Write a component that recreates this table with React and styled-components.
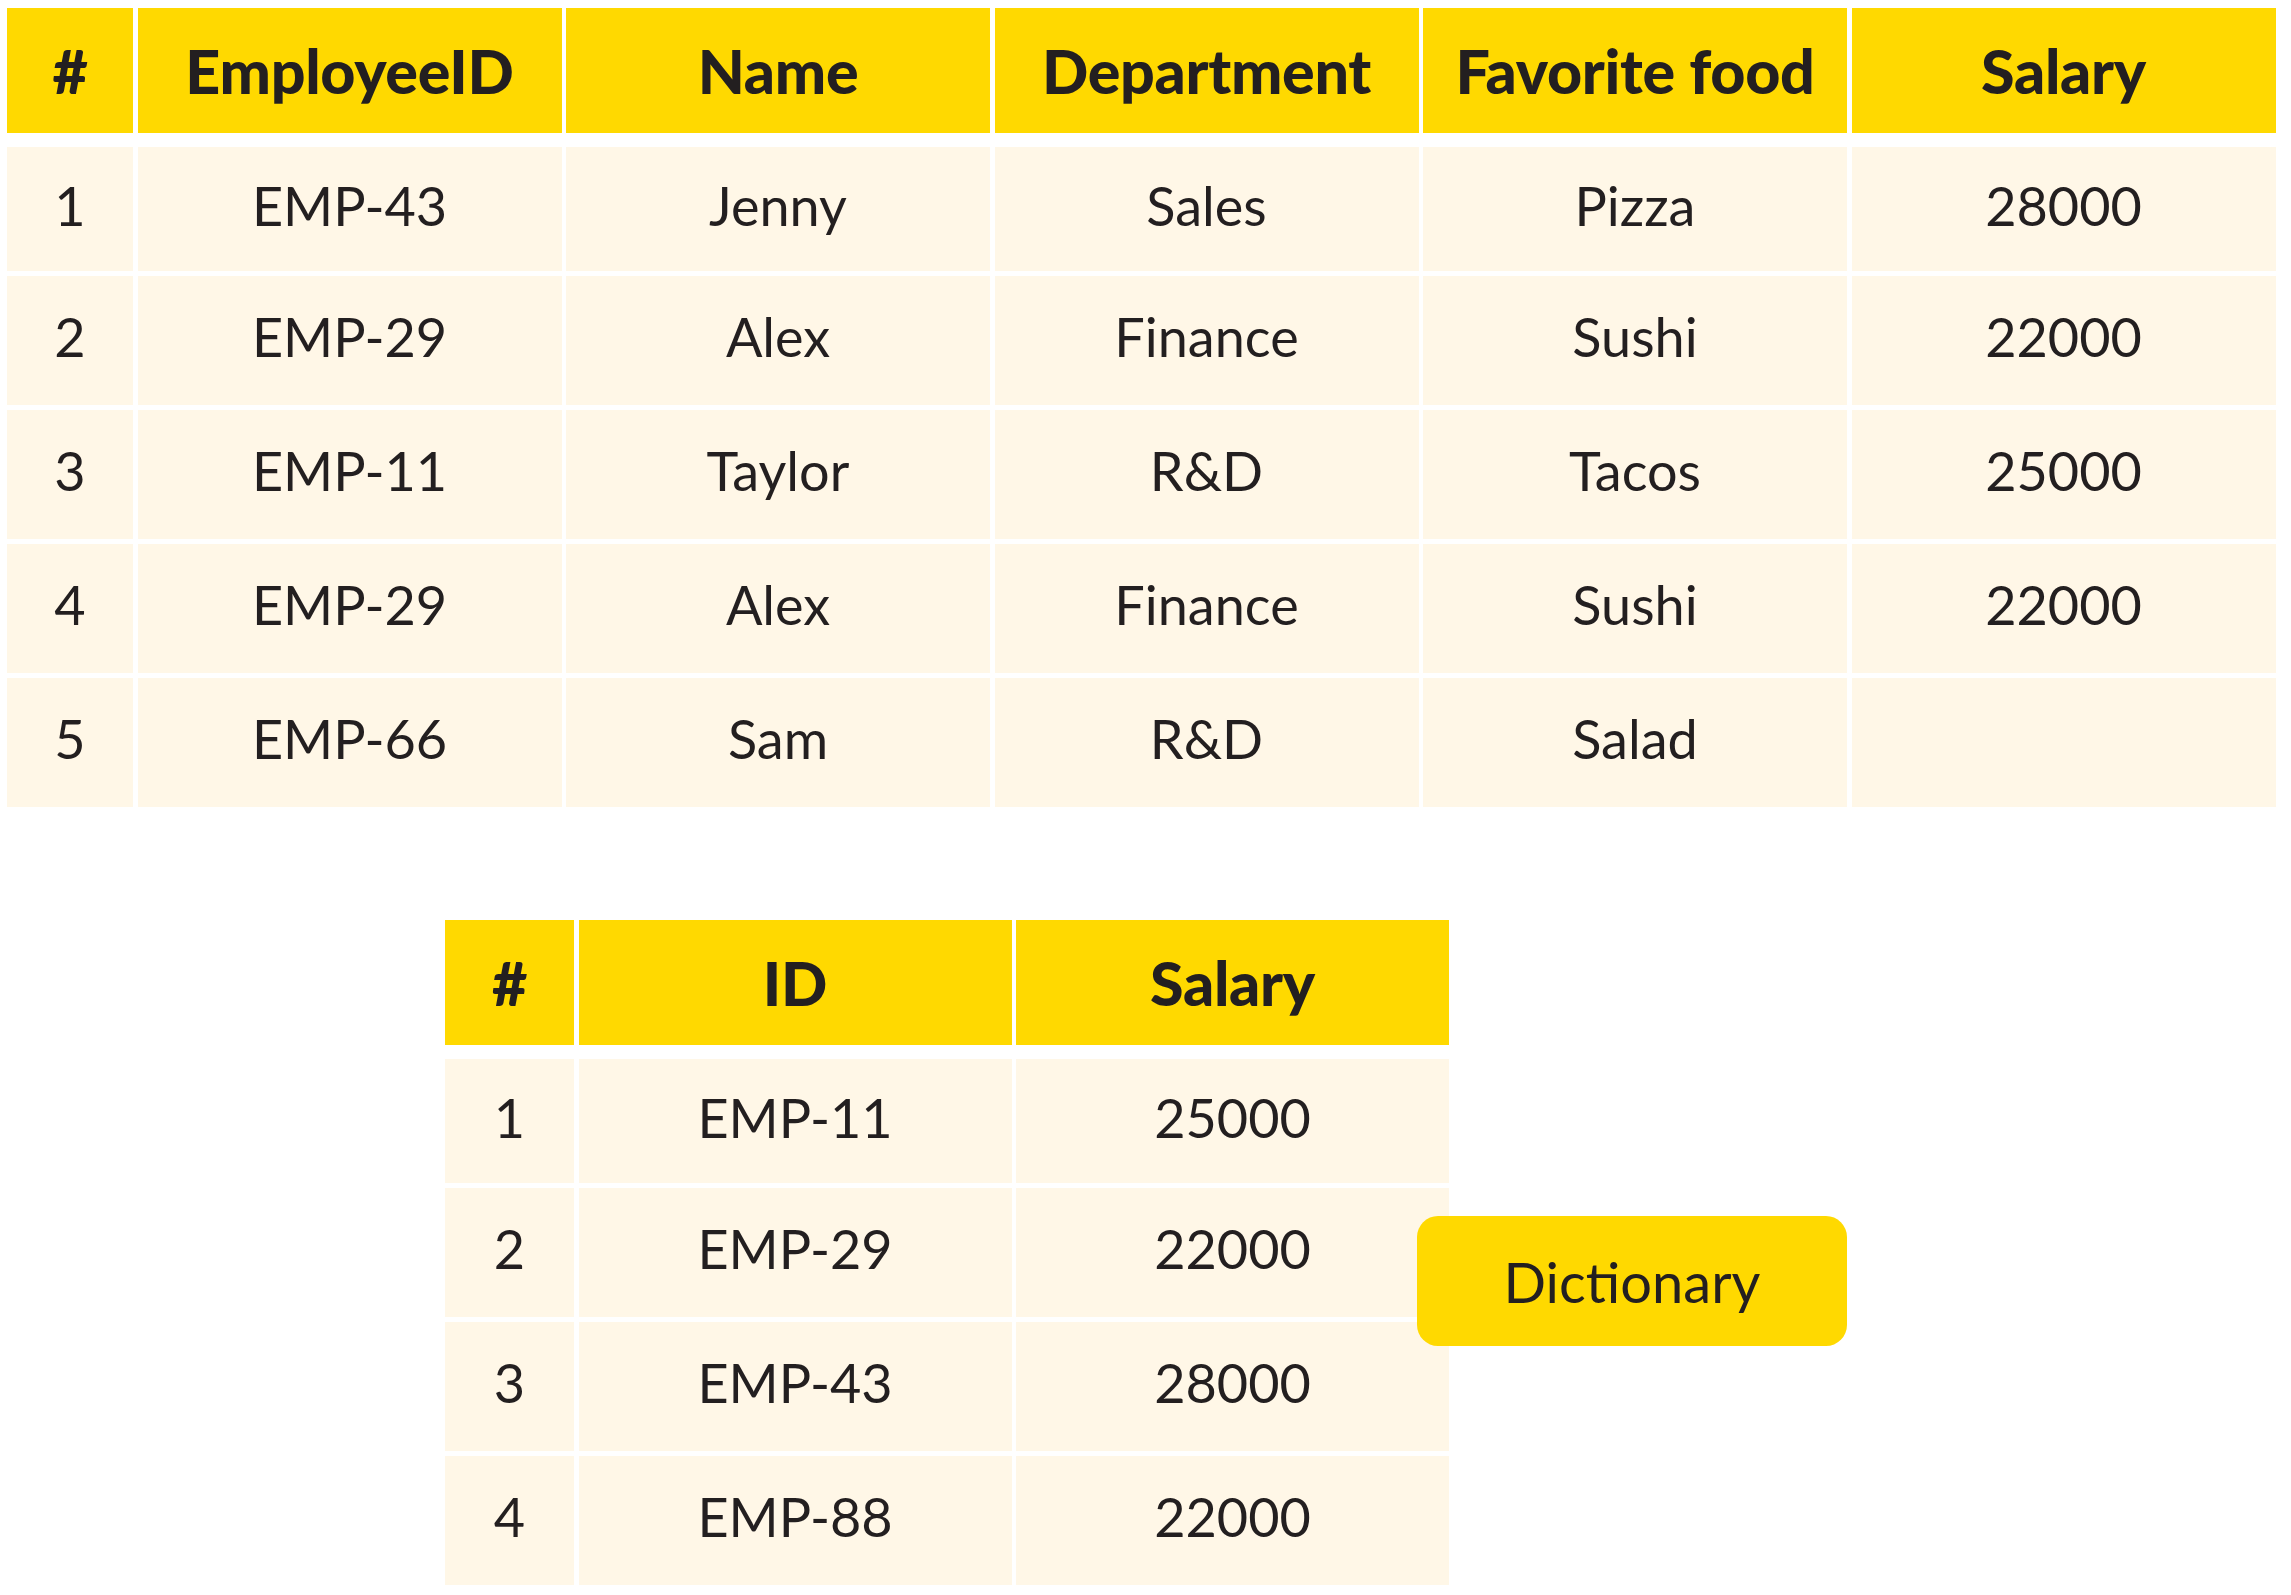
import styled, { createGlobalStyle } from 'styled-components';

const employees = [
    { id: 'EMP-43', name: 'Jenny', dept: 'Sales', food: 'Pizza', salary: '28000' },
    { id: 'EMP-29', name: 'Alex', dept: 'Finance', food: 'Sushi', salary: '22000' },
    { id: 'EMP-11', name: 'Taylor', dept: 'R&D', food: 'Tacos', salary: '25000' },
    { id: 'EMP-29', name: 'Alex', dept: 'Finance', food: 'Sushi', salary: '22000' },
    { id: 'EMP-66', name: 'Sam', dept: 'R&D', food: 'Salad', salary: '' },
];

const dictionary = [
    { id: 'EMP-11', salary: '25000' },
    { id: 'EMP-29', salary: '22000' },
    { id: 'EMP-43', salary: '28000' },
    { id: 'EMP-88', salary: '22000' },
];

export default function App() {
    return (
        <>
            <GlobalStyle />
            <Page>
                <Table>
                    <Head $cols="126px repeat(5, 424px)">
                        <HeadCell>#</HeadCell>
                        <HeadCell>EmployeeID</HeadCell>
                        <HeadCell>Name</HeadCell>
                        <HeadCell>Department</HeadCell>
                        <HeadCell>Favorite food</HeadCell>
                        <HeadCell>Salary</HeadCell>
                    </Head>
                    <Body $cols="126px repeat(5, 424px)" $rows={5}>
                        {employees.map((e, i) => (
                            <Row key={i}>
                                <Cell>{i + 1}</Cell>
                                <Cell>{e.id}</Cell>
                                <Cell>{e.name}</Cell>
                                <Cell>{e.dept}</Cell>
                                <Cell>{e.food}</Cell>
                                <Cell>{e.salary}</Cell>
                            </Row>
                        ))}
                    </Body>
                </Table>

                <Lower>
                    <Table>
                        <Head $cols="129px 433px 433px">
                            <HeadCell>#</HeadCell>
                            <HeadCell>ID</HeadCell>
                            <HeadCell>Salary</HeadCell>
                        </Head>
                        <Body $cols="129px 433px 433px" $rows={4}>
                            {dictionary.map((d, i) => (
                                <Row key={i}>
                                    <Cell>{i + 1}</Cell>
                                    <Cell>{d.id}</Cell>
                                    <Cell>{d.salary}</Cell>
                                </Row>
                            ))}
                        </Body>
                    </Table>
                    <Label>Dictionary</Label>
                </Lower>
            </Page>
        </>
    )
}

const GlobalStyle = createGlobalStyle`
body{
    margin: 0;
    background: #fff;
    font-family: Lato, "Open Sans", sans-serif;
    color: #231F20;
}
`;

const Page = styled.div`
width: 2291px;
height: 1595px;
padding: 8px 0 0 7px;
box-sizing: border-box;
display: flex;
flex-direction: column;
gap: 113px;
`;

const Table = styled.div`
display: flex;
flex-direction: column;
gap: 14px;
`;

const Head = styled.div`
display: grid;
grid-template-columns: ${p => p.$cols};
column-gap: 4.5px;
height: 125px;
`;

const Body = styled.div`
display: grid;
grid-template-columns: ${p => p.$cols};
grid-template-rows: 124px repeat(${p => p.$rows - 1}, 129px);
column-gap: 4.5px;
row-gap: 5px;
`;

const Row = styled.div`
display: contents;
`;

const HeadCell = styled.div`
background: #FFD900;
display: flex;
align-items: center;
justify-content: center;
font-size: 61px;
font-weight: 900;
letter-spacing: -0.3px;
`;

const Cell = styled.div`
background: #FFF7E7;
display: flex;
align-items: center;
justify-content: center;
padding-bottom: 8px;
font-size: 54px;
font-weight: 400;
`;

const Lower = styled.div`
position: relative;
margin-left: 438px;
`;

const Label = styled.div`
position: absolute;
left: 972px;
top: 296px;
width: 430px;
height: 130px;
border-radius: 21px;
background: #FFD900;
display: flex;
align-items: center;
justify-content: center;
font-size: 56px;
`;
